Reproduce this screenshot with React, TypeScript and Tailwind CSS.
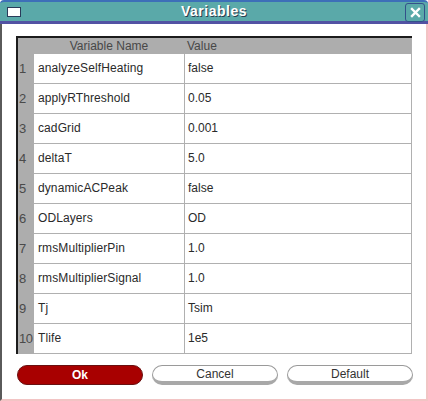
import React from "react";

const rows: [string, string][] = [
  ["analyzeSelfHeating", "false"],
  ["applyRThreshold", "0.05"],
  ["cadGrid", "0.001"],
  ["deltaT", "5.0"],
  ["dynamicACPeak", "false"],
  ["ODLayers", "OD"],
  ["rmsMultiplierPin", "1.0"],
  ["rmsMultiplierSignal", "1.0"],
  ["Tj", "Tsim"],
  ["Tlife", "1e5"],
];

export default function App() {
  return (
    <div
      className="w-[428px] h-[401px] bg-white overflow-hidden flex flex-col"
      style={{ fontFamily: '"Liberation Sans", Arial, sans-serif' }}
    >
      {/* Title bar */}
      <div className="h-[24px] shrink-0 rounded-t-[4px] bg-[#5aa9a9] border-t-2 border-[#3d6fb8] border-b-[3px] border-b-[#5252a3] flex items-center relative">
        <div className="absolute left-[7px] top-[5px] w-[14px] h-[10px] bg-white border border-[#2a3b5a]" />
        <div
          className="flex-1 text-center text-white font-bold text-[14px] tracking-[0.5px]"
          style={{ textShadow: "1px 1px 0 #2c3e4e" }}
        >
          Variables
        </div>
        <div className="absolute right-[3px] top-[1px] w-[20px] h-[19px] rounded-[3px] border border-[#33508a] bg-[#5aa9a9] flex items-center justify-center">
          <svg width="11" height="11" viewBox="0 0 11 11">
            <path d="M2 2 L9 9 M9 2 L2 9" stroke="white" strokeWidth="2.4" strokeLinecap="square" />
          </svg>
        </div>
      </div>

      {/* Body */}
      <div className="flex-1 border-l-2 border-l-[#5a5a5a] border-r-2 border-r-[#f2c4c4] border-b-2 border-b-[#f2c4c4] flex flex-col pl-[14px] pt-[12px]">
        <div className="w-[396px] border-t-2 border-l-2 border-[#1c1c1c] bg-[#adadad]">
          <div className="h-[16px] grid grid-cols-[16px_150px_1fr] text-[12px] text-[#484848] leading-[16px] border-r border-r-[#b0b0b0]">
            <div />
            <div className="text-center">Variable Name</div>
            <div className="pl-[3px]">Value</div>
          </div>
          {rows.map(([name, value], i) => (
            <div
              key={name}
              className="h-[30px] grid grid-cols-[16px_150px_1fr] text-[12px] text-[#2a2a2a] leading-[29px]"
            >
              <div className="bg-[#adadad] text-[#4a4a4a] pl-[1px] tracking-[-0.5px] text-[13px]">{i + 1}</div>
              <div className="bg-white border-b border-b-[#b0b0b0] pl-[4px] tracking-[0.1px]">{name}</div>
              <div className="bg-white border-b border-b-[#b0b0b0] border-l border-l-[#b0b0b0] border-r border-r-[#b0b0b0] pl-[3px]">
                {value}
              </div>
            </div>
          ))}
        </div>

        <div className="flex gap-[9px] mt-[11px] ml-[1px]">
          <button className="w-[126px] h-[20px] rounded-full bg-[#a80000] border border-[#6a1010] text-white font-bold text-[12px] leading-[18px]">
            Ok
          </button>
          <button className="w-[126px] h-[20px] rounded-full bg-white border border-[#9a9a9a] border-b-[4px] border-b-[#a8a8a8] text-[#333] text-[12px] leading-[14px]">
            Cancel
          </button>
          <button className="w-[126px] h-[20px] rounded-full bg-white border border-[#9a9a9a] border-b-[4px] border-b-[#a8a8a8] text-[#333] text-[12px] leading-[14px]">
            Default
          </button>
        </div>
      </div>
    </div>
  );
}
